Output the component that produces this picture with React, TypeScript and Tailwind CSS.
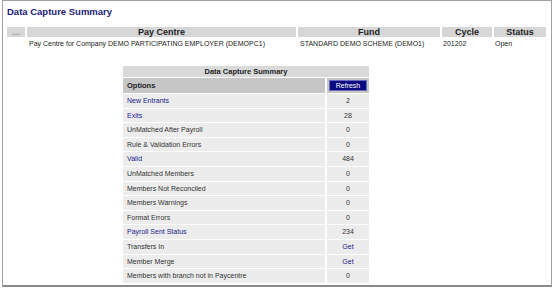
const rows: { label: string; value: string; link?: boolean; valueLink?: boolean }[] = [
  { label: 'New Entrants', value: '2', link: true },
  { label: 'Exits', value: '28', link: true },
  { label: 'UnMatched After Payroll', value: '0' },
  { label: 'Rule & Validation Errors', value: '0' },
  { label: 'Valid', value: '484', link: true },
  { label: 'UnMatched Members', value: '0' },
  { label: 'Members Not Reconciled', value: '0' },
  { label: 'Members Warnings', value: '0' },
  { label: 'Format Errors', value: '0' },
  { label: 'Payroll Sent Status', value: '234', link: true },
  { label: 'Transfers In', value: 'Get', valueLink: true },
  { label: 'Member Merge', value: 'Get', valueLink: true },
  { label: 'Members with branch not in Paycentre', value: '0' },
];

export default function App() {
  return (
    <div
      className="w-[554px] h-[290px] bg-white overflow-hidden"
      style={{ fontFamily: '"Liberation Sans", Arial, sans-serif' }}
    >
      <div className="w-[550px] h-[287px] ml-[2px] border-l border-t border-r border-[#a0a0a0] border-b-2 border-b-[#8a8a8a] flex flex-col">
        <div className="pl-[4px] pt-[4px] h-[26px] text-[9.5px] font-bold text-[#1c1c78]">Data Capture Summary</div>

        {/* Pay centre table */}
        <div className="flex gap-[2px] pl-[4px] h-[10px] text-[9px] font-bold text-[#222] leading-[10px]">
          <div className="w-[18px] bg-[#d6d6d6] text-center text-[#999]">...</div>
          <div className="w-[269px] bg-[#d6d6d6] text-center">Pay Centre</div>
          <div className="w-[142px] bg-[#d6d6d6] text-center">Fund</div>
          <div className="w-[50px] bg-[#d6d6d6] text-center">Cycle</div>
          <div className="w-[52px] bg-[#d6d6d6] text-center">Status</div>
        </div>
        <div className="flex gap-[2px] pl-[4px] mt-[2px] h-[10px] text-[7px] text-[#222] leading-[10px]">
          <div className="w-[18px]" />
          <div className="w-[269px] pl-[2px]">Pay Centre for Company DEMO PARTICIPATING EMPLOYER (DEMOPC1)</div>
          <div className="w-[142px] pl-[2px]">STANDARD DEMO SCHEME (DEMO1)</div>
          <div className="w-[50px] pl-[1px]">201202</div>
          <div className="w-[52px] pl-[1px]">Open</div>
        </div>

        {/* Summary table */}
        <div className="ml-[120px] mt-[17px] w-[246px] flex flex-col gap-[1px]">
          <div className="h-[11px] bg-[#d9d9d9] text-center text-[7.5px] font-bold text-[#222] leading-[11px]">
            Data Capture Summary
          </div>
          <div className="flex gap-[2px] h-[15px]">
            <div className="flex-1 bg-[#c6c6c6] pl-[4px] text-[7.5px] font-bold text-[#222] leading-[15px]">Options</div>
            <div className="w-[42px] bg-[#c6c6c6] flex items-center justify-center">
              <div className="w-[38px] h-[11px] bg-[#0b0b80] border border-[#6a6ac0] text-white text-[7px] leading-[9px] text-center">
                Refresh
              </div>
            </div>
          </div>
          {rows.map((r) => (
            <div key={r.label} className="flex gap-[2px] h-[13.6px] text-[7px] leading-[13.6px]">
              <div className={`flex-1 bg-[#ececec] pl-[4px] ${r.link ? 'text-[#22228a]' : 'text-[#333]'}`}>{r.label}</div>
              <div className={`w-[42px] bg-[#ececec] text-center ${r.valueLink ? 'text-[#22228a]' : 'text-[#333]'}`}>
                {r.value}
              </div>
            </div>
          ))}
        </div>
      </div>
    </div>
  );
}
